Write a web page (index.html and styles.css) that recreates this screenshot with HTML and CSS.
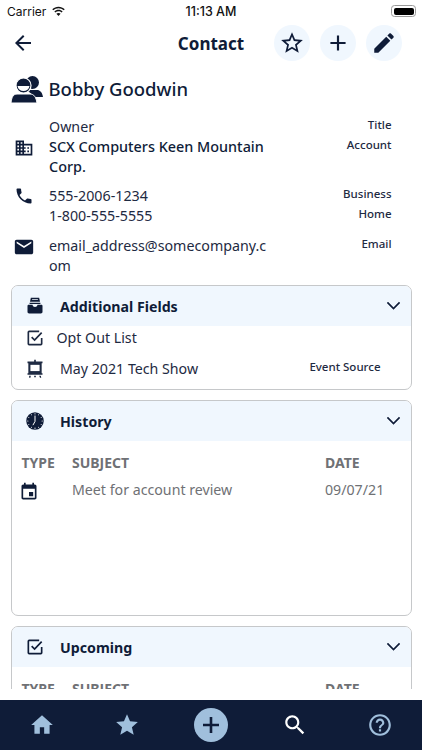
FILE: index.html
```html
<!DOCTYPE html>
<html lang="en">
<head>
    <meta charset="UTF-8">
    <title>Contact</title>
    <link rel="stylesheet" href="styles.css">
</head>
<body>
    <div class="status-bar">
        <div class="status-left">
            <span>Carrier</span>
            <svg class="wifi" viewBox="0 0 16 12"><path d="M8 2.400c2.200 0 4.200.9 5.700 2.300l1.100-1.200C13 1.800 10.600.8 8 .8S3 1.800 1.200 3.500l1.100 1.200C3.800 3.300 5.800 2.400 8 2.400z"/><path d="M8 5.800c1.300 0 2.500.5 3.400 1.300l1.100-1.200C11.300 4.800 9.700 4.100 8 4.100s-3.300.7-4.500 1.800l1.100 1.200C5.500 6.300 6.700 5.800 8 5.800z"/><path d="M8 7.500c-.9 0-1.700.3-2.300.9L8 11l2.300-2.600c-.6-.6-1.400-.9-2.300-.9z"/></svg>
        </div>
        <div class="status-time">11:13 AM</div>
        <div class="battery"><div class="battery-fill"></div></div>
    </div>

    <div class="nav-bar">
        <svg class="back-icon" viewBox="0 0 24 24"><path d="M20 11H7.830l5.590-5.590L12 4l-8 8 8 8 1.410-1.410L7.830 13H20v-2z"/></svg>
        <h1 class="nav-title">Contact</h1>
        <div class="nav-actions">
            <div class="round-btn"><svg viewBox="0 0 24 24"><path d="M22 9.240l-7.190-.62L12 2 9.190 8.630 2 9.240l5.460 4.730L5.820 21 12 17.270 18.180 21l-1.630-7.030L22 9.240zM12 15.400l-3.760 2.270 1-4.280-3.320-2.880 4.380-.38L12 6.100l1.710 4.040 4.380.38-3.320 2.880 1 4.280L12 15.400z"/></svg></div>
            <div class="round-btn"><svg viewBox="0 0 24 24"><path d="M19 13h-6v6h-2v-6H5v-2h6V5h2v6h6v2z"/></svg></div>
            <div class="round-btn"><svg viewBox="0 0 24 24"><path d="M3 17.250V21h3.750L17.810 9.940l-3.750-3.750L3 17.250zM20.710 7.040c.39-.39.39-1.020 0-1.410l-2.340-2.340c-.39-.39-1.020-.39-1.410 0l-1.830 1.830 3.750 3.750 1.830-1.830z"/></svg></div>
        </div>
    </div>

    <div class="content">
        <div class="name-row">
            <svg class="people-icon" viewBox="0 0 32 28">
                <circle cx="21.500" cy="7.500" r="6.500"/>
                <path d="M18 15h8c3 0 5 2 6 7H22c-1-3-3-5-6-6z"/>
                <circle cx="12.500" cy="10.500" r="7.500" stroke="#fff" stroke-width="1.200"/>
                <path d="M6.500 11h12c-.5 3.200-3 5-6 5s-5.500-1.800-6-5z" fill="#fff"/>
                <path d="M6 19h13c4 0 6 3 7 9H0c.5-6 2.500-9 6-9z" stroke="#fff" stroke-width="1"/>
            </svg>
            <div class="contact-name">Bobby Goodwin</div>
        </div>

        <div class="detail-group group-account">
            <svg class="detail-icon icon-domain" viewBox="0 0 24 24"><path d="M12 7V3H2v18h20V7H10zM6 19H4v-2h2v2zm0-4H4v-2h2v2zm0-4H4V9h2v2zm0-4H4V5h2v2zm4 12H8v-2h2v2zm0-4H8v-2h2v2zm0-4H8V9h2v2zm0-4H8V5h2v2zm10 12h-8v-2h2v-2h-2v-2h2v-2h-2V9h8v10zm-2-8h-2v2h2v-2zm0 4h-2v2h2v-2z"/></svg>
            <div class="detail-lines">
                <div class="detail-line"><div class="detail-value">Owner</div><div class="detail-label">Title</div></div>
                <div class="detail-line"><div class="detail-value strong">SCX Computers Keen Mountain Corp.</div><div class="detail-label">Account</div></div>
            </div>
        </div>

        <div class="detail-group group-phone">
            <svg class="detail-icon icon-phone" viewBox="0 0 24 24"><path d="M6.620 10.790c1.440 2.830 3.760 5.140 6.590 6.590l2.200-2.200c.27-.27.67-.36 1.020-.24 1.120.37 2.330.57 3.570.57.55 0 1 .45 1 1V20c0 .55-.45 1-1 1-9.390 0-17-7.610-17-17 0-.55.45-1 1-1h3.500c.55 0 1 .45 1 1 0 1.250.2 2.450.57 3.570.11.35.03.74-.25 1.020l-2.200 2.200z"/></svg>
            <div class="detail-lines">
                <div class="detail-line"><div class="detail-value">555-2006-1234</div><div class="detail-label">Business</div></div>
                <div class="detail-line"><div class="detail-value">1-800-555-5555</div><div class="detail-label">Home</div></div>
            </div>
        </div>

        <div class="detail-group group-email">
            <svg class="detail-icon icon-email" viewBox="0 0 24 24"><path d="M20 4H4c-1.100 0-1.990.9-1.990 2L2 18c0 1.100.9 2 2 2h16c1.100 0 2-.9 2-2V6c0-1.100-.9-2-2-2zm0 4l-8 5-8-5V6l8 5 8-5v2z"/></svg>
            <div class="detail-lines">
                <div class="detail-line"><div class="detail-value break">email_address@somecompany.com</div><div class="detail-label">Email</div></div>
            </div>
        </div>

        <section class="card card-fields">
            <div class="card-header">
                <svg class="card-icon" viewBox="0 0 24 24"><path d="M7 2h10l1 5H6z M8.500 3.600v1h7v-1z" fill-rule="evenodd"/><path d="M5.500 8h13v1.500h-13z"/><path d="M4.500 10.500H9c.3 1.700 1.500 2.700 3 2.700s2.700-1 3-2.700h4.500c1 0 1.500.6 1.500 1.500v7c0 1.200-.8 2-2 2H5c-1.200 0-2-.8-2-2v-7c0-.9.5-1.500 1.500-1.500z"/></svg>
                <h2 class="card-title">Additional Fields</h2>
                <svg class="chevron" viewBox="0 0 16 10"><path d="M1.500 1.500L8 8l6.500-6.500"/></svg>
            </div>
            <div class="field-row field-opt">
                <svg class="card-icon" viewBox="0 0 24 24"><path d="M20 12v7c0 .6-.4 1-1 1H5c-.6 0-1-.4-1-1V5c0-.6.4-1 1-1h12" class="outline"/><path d="M8 11l3.500 3.500L20 5.500" class="outline"/></svg>
                <span class="field-text">Opt Out List</span>
            </div>
            <div class="field-row field-event">
                <svg class="card-icon" viewBox="0 0 24 24"><path d="M11 1h2v2h8v2h-1v12h1v2H3v-2h1V5H3V3h8z"/><rect x="6.500" y="7" width="11" height="7.500" fill="#fff"/><path d="M5 20h2l-.5 2.500h-1.500zM17 20h2l.5 2.500H18zM11 20h2v2h-2z"/></svg>
                <span class="field-text">May 2021 Tech Show</span>
                <span class="field-label">Event Source</span>
            </div>
        </section>

        <section class="card card-history">
            <div class="card-header">
                <svg class="card-icon" viewBox="0 0 24 24"><circle cx="12" cy="12" r="10.500"/><path d="M12 5.500v7l-2.500 4.500" fill="none" stroke="#fff" stroke-width="1.200"/><g fill="#fff"><circle cx="12" cy="3.400" r=".7"/><circle cx="16.300" cy="4.600" r=".6"/><circle cx="19.400" cy="7.700" r=".6"/><circle cx="20.600" cy="12" r=".7"/><circle cx="19.400" cy="16.300" r=".6"/><circle cx="16.300" cy="19.400" r=".6"/><circle cx="12" cy="20.600" r=".7"/><circle cx="7.700" cy="19.400" r=".6"/><circle cx="4.600" cy="16.300" r=".6"/><circle cx="3.400" cy="12" r=".7"/><circle cx="4.600" cy="7.700" r=".6"/><circle cx="7.700" cy="4.600" r=".6"/></g></svg>
                <h2 class="card-title">History</h2>
                <svg class="chevron" viewBox="0 0 16 10"><path d="M1.500 1.500L8 8l6.500-6.500"/></svg>
            </div>
            <div class="table-head">
                <span class="col-type">TYPE</span>
                <span class="col-subject">SUBJECT</span>
                <span class="col-date">DATE</span>
            </div>
            <div class="table-row">
                <span class="col-type"><svg class="event-icon" viewBox="0 0 24 24"><path d="M17 12h-5v5h5v-5zM16 1v2H8V1H6v2H5c-1.110 0-1.990.9-1.990 2L3 19c0 1.100.89 2 2 2h14c1.100 0 2-.9 2-2V5c0-1.100-.9-2-2-2h-1V1h-2zm3 18H5V8h14v11z"/></svg></span>
                <span class="col-subject">Meet for account review</span>
                <span class="col-date">09/07/21</span>
            </div>
        </section>

        <section class="card card-upcoming">
            <div class="card-header">
                <svg class="card-icon" viewBox="0 0 24 24"><path d="M20 12v7c0 .6-.4 1-1 1H5c-.6 0-1-.4-1-1V5c0-.6.4-1 1-1h12" class="outline"/><path d="M8 11l3.500 3.500L20 5.500" class="outline"/></svg>
                <h2 class="card-title">Upcoming</h2>
                <svg class="chevron" viewBox="0 0 16 10"><path d="M1.500 1.500L8 8l6.500-6.500"/></svg>
            </div>
            <div class="table-head">
                <span class="col-type">TYPE</span>
                <span class="col-subject">SUBJECT</span>
                <span class="col-date">DATE</span>
            </div>
        </section>
    </div>

    <div class="tab-bar">
        <svg class="tab-icon" viewBox="0 0 24 24"><path d="M10 20v-6h4v6h5v-8h3L12 3 2 12h3v8z"/></svg>
        <svg class="tab-icon" viewBox="0 0 24 24"><path d="M12 17.270L18.180 21l-1.640-7.030L22 9.240l-7.190-.61L12 2 9.190 8.630 2 9.240l5.460 4.730L5.820 21z"/></svg>
        <div class="tab-add"><svg viewBox="0 0 24 24"><path d="M20 13.300h-6.700V20h-2.600v-6.700H4v-2.600h6.700V4h2.600v6.700H20z"/></svg></div>
        <svg class="tab-icon tab-search" viewBox="0 0 24 24"><path d="M15.500 14h-.79l-.28-.27C15.410 12.590 16 11.110 16 9.500 16 5.910 13.090 3 9.500 3S3 5.910 3 9.500 5.910 16 9.500 16c1.610 0 3.090-.59 4.230-1.570l.27.28v.79l5 4.990L20.490 19l-4.990-5zm-6 0C7.010 14 5 11.990 5 9.500S7.010 5 9.500 5 14 7.010 14 9.500 11.990 14 9.500 14z"/></svg>
        <svg class="tab-icon" viewBox="0 0 24 24"><path d="M11 18h2v-2h-2v2zm1-16C6.480 2 2 6.480 2 12s4.480 10 10 10 10-4.480 10-10S17.520 2 12 2zm0 18c-4.410 0-8-3.590-8-8s3.590-8 8-8 8 3.590 8 8-3.590 8-8 8zm0-14c-2.210 0-4 1.790-4 4h2c0-1.100.9-2 2-2s2 .9 2 2c0 2-3 1.750-3 5h2c0-2.250 3-2.500 3-5 0-2.210-1.790-4-4-4z"/></svg>
    </div>
</body>
</html>
```

FILE: styles.css
```css
:root {
    --navy: #0f1c38;
    --pale: #f0f7fe;
    --tab: #a0bfdc;
    --grey: #6f7175;
}

* {
    box-sizing: border-box;
}

html, body {
    height: 100%;
}

body {
    margin: 0;
    height: 750px;
    overflow: hidden;
    display: flex;
    flex-direction: column;
    background: #fff;
    color: var(--navy);
    font-family: "Noto Sans", sans-serif;
}

svg {
    fill: currentColor;
    display: block;
    flex-shrink: 0;
}

/* status bar */
.status-bar {
    height: 22px;
    flex-shrink: 0;
    display: flex;
    align-items: center;
    justify-content: space-between;
    padding: 0 6px 0 7px;
    position: relative;
    font-family: Inter, sans-serif;
    font-size: 12px;
    color: #111;
}

.status-left {
    display: flex;
    align-items: center;
    gap: 5px;
}

.wifi {
    width: 15px;
    height: 11px;
}

.status-time {
    position: absolute;
    left: 0;
    right: 0;
    text-align: center;
    font-weight: 500;
    font-size: 12.500px;
}

.battery {
    width: 25px;
    height: 12px;
    border: 1px solid #9a9a9a;
    border-radius: 3.500px;
    padding: 1.500px;
}

.battery-fill {
    height: 100%;
    background: #000;
    border-radius: 2px;
}

/* top nav */
.nav-bar {
    height: 42px;
    flex-shrink: 0;
    display: flex;
    align-items: center;
    justify-content: space-between;
    padding: 0 20px 0 11px;
    position: relative;
}

.back-icon {
    width: 24px;
    height: 24px;
}

.nav-title {
    position: absolute;
    left: 0;
    right: 0;
    margin: 0;
    text-align: center;
    font-size: 17px;
    font-weight: 700;
    pointer-events: none;
}

.nav-actions {
    display: flex;
    gap: 10px;
}

.round-btn {
    width: 36px;
    height: 36px;
    border-radius: 50%;
    background: var(--pale);
    display: flex;
    align-items: center;
    justify-content: center;
}

.round-btn svg {
    width: 26px;
    height: 26px;
}

/* scrolling part */
.content {
    height: 625px;
    flex-shrink: 0;
    overflow: hidden;
    padding: 0 10.500px;
}

.name-row {
    display: flex;
    align-items: center;
    gap: 6px;
    height: 32px;
    margin-top: 9px;
}

.people-icon {
    width: 32px;
    height: 28px;
}

.contact-name {
    font-size: 18.500px;
    font-weight: 500;
    line-height: 26px;
}

.detail-group {
    display: flex;
    align-items: flex-start;
}

.group-account {
    margin-top: 12px;
}

.group-phone {
    margin-top: 9px;
}

.group-email {
    margin-top: 10px;
}

.detail-icon {
    width: 20px;
    height: 20px;
    margin-left: 3.500px;
    margin-right: 15px;
}

.icon-domain {
    margin-top: 21px;
}

.icon-email {
    width: 22px;
    height: 22px;
    margin-left: 2.500px;
    margin-right: 14px;
}

.detail-lines {
    flex: 1;
    display: flex;
    flex-direction: column;
}

.detail-line {
    display: flex;
    justify-content: space-between;
    align-items: flex-start;
    padding-right: 20px;
}

.detail-value {
    width: 219px;
    font-size: 14.250px;
    line-height: 20px;
    color: #1e2a42;
}

.detail-value.strong {
    font-size: 14.400px;
    font-weight: 500;
    color: var(--navy);
}

.detail-value.break {
    word-break: break-all;
}

.detail-label {
    font-size: 11.500px;
    font-weight: 500;
    line-height: 16px;
    color: #1e2a42;
}

/* cards */
.card {
    border: 1px solid #c6c8ca;
    border-radius: 7px;
    margin-top: 10px;
    overflow: hidden;
}

.card-fields {
    margin-top: 9px;
    height: 105px;
}

.card-history {
    height: 216px;
}

.card-upcoming {
    height: 120px;
}

.card-header {
    height: 40px;
    background: var(--pale);
    display: flex;
    align-items: center;
    padding: 0 9.500px 0 13px;
}

.card-icon {
    width: 20px;
    height: 20px;
}

.outline {
    fill: none;
    stroke: currentColor;
    stroke-width: 2;
}

.card-title {
    margin: 0 0 0 15.500px;
    flex: 1;
    font-size: 14.200px;
    font-weight: 700;
}

.chevron {
    width: 15px;
    height: 9.400px;
    fill: none;
    stroke: currentColor;
    stroke-width: 1.800;
}

.field-row {
    display: flex;
    align-items: center;
    font-size: 14.200px;
    padding: 0 30px 0 13px;
    color: #1e2a42;
}

.field-opt {
    height: 23px;
}

.field-opt .field-text {
    margin-left: 12px;
}

.field-event {
    height: 39px;
}

.field-event .field-text {
    margin-left: 15.500px;
    flex: 1;
}

.field-label {
    font-size: 11.500px;
    font-weight: 500;
    margin-bottom: 4px;
}

.table-head,
.table-row {
    display: grid;
    grid-template-columns: 50.500px 253px 1fr;
    padding: 0 10px;
}

.table-head {
    margin-top: 12px;
    font-size: 14px;
    font-weight: 700;
    line-height: 20px;
    color: var(--grey);
}

.table-row {
    margin-top: 7px;
    font-size: 14.200px;
    line-height: 20px;
    color: var(--grey);
}

.event-icon {
    width: 20px;
    height: 20px;
    margin-top: 2px;
    margin-left: -3px;
    color: var(--navy);
}

/* bottom tabs */
.tab-bar {
    margin-top: 11px;
    height: 50px;
    flex-shrink: 0;
    background: var(--navy);
    display: grid;
    grid-template-columns: repeat(5, 1fr);
    justify-items: center;
    align-items: center;
    color: var(--tab);
}

.tab-icon {
    width: 26px;
    height: 26px;
}

.tab-search {
    color: #fff;
}

.tab-add {
    width: 34px;
    height: 34px;
    border-radius: 50%;
    background: var(--tab);
    color: var(--navy);
    display: flex;
    align-items: center;
    justify-content: center;
}

.tab-add svg {
    width: 24px;
    height: 24px;
}
```
